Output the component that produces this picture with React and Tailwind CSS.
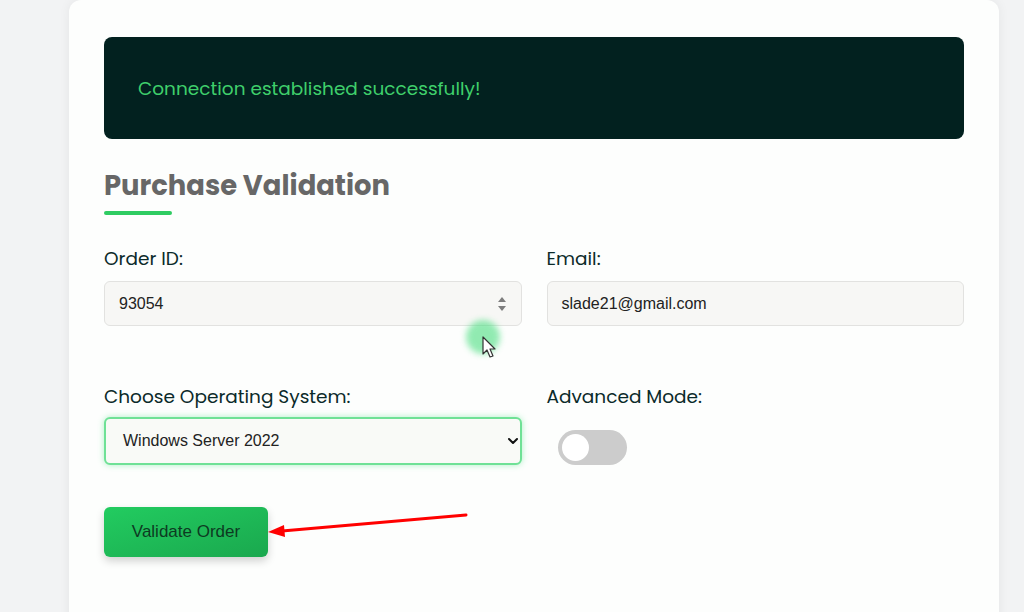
import React from "react";

export default function App() {
  const font = { fontFamily: "'Poppins', 'Open Sans', sans-serif" };
  const label = "block text-[18.5px] leading-[24px] font-normal text-[#0b2a2a]";
  return (
    <div className="relative min-h-[612px] h-[612px] overflow-hidden bg-[#f2f3f4]">
      <div
        className="ml-[69px] w-[930px] h-[640px] rounded-t-xl bg-[#fdfefd] shadow-[0_0_12px_rgba(0,0,0,0.06)] pt-[37px] px-[35px]"
        style={font}
      >
        <div className="h-[102px] rounded-lg bg-[#02211f] flex items-center pl-[34px] pt-[2px]">
          <span className="text-[18.5px] font-normal text-[#3fcf6b]">
            Connection established successfully!
          </span>
        </div>

        <h2 className="mt-[29px] text-[27.4px] leading-[36px] font-bold text-[#676767]">
          Purchase Validation
        </h2>
        <div className="mt-[7px] w-[68px] h-[4px] rounded-full bg-[#2fcc62]" />

        <div className="mt-[32px] grid grid-cols-2 gap-x-[25px]">
          <div>
            <label className={label}>Order ID:</label>
            <div className="mt-[10px] h-[45px] rounded-md border border-[#e2e2e0] bg-[#f7f7f5] flex items-center justify-between pl-[14px] pr-[14px]">
              <span className="text-[16px] text-[#222] font-['Liberation_Sans',Arial,sans-serif]">93054</span>
              <svg width="10" height="16" viewBox="0 0 10 16">
                <path d="M5 1 L9 6 L1 6 Z" fill="#7d7d7d" />
                <path d="M5 15 L9 10 L1 10 Z" fill="#7d7d7d" />
              </svg>
            </div>
          </div>
          <div>
            <label className={label}>Email:</label>
            <div className="mt-[10px] h-[45px] rounded-md border border-[#e2e2e0] bg-[#f7f7f5] flex items-center pl-[14px]">
              <span className="text-[16px] text-[#222] font-['Liberation_Sans',Arial,sans-serif]">slade21@gmail.com</span>
            </div>
          </div>

          <div className="mt-[59px]">
            <label className={label}>Choose Operating System:</label>
            <div className="mt-[8px] h-[48px] rounded-md border-2 border-[#6fe196] bg-[#f9faf7] shadow-[0_0_6px_rgba(74,222,128,0.45)] flex items-center justify-between pl-[17px] pr-[1px]">
              <span className="text-[16px] text-[#222] font-['Liberation_Sans',Arial,sans-serif]">Windows Server 2022</span>
              <svg width="12" height="12" viewBox="0 0 12 12">
                <path d="M2 4 L6 8 L10 4" fill="none" stroke="#111" strokeWidth="2" strokeLinecap="round" strokeLinejoin="round" />
              </svg>
            </div>
          </div>
          <div className="mt-[59px]">
            <label className={label}>Advanced Mode:</label>
            <div className="mt-[21px] ml-[11px] w-[69px] h-[35px] rounded-full bg-[#cccccc] flex items-center pl-[4px]">
              <div className="w-[27px] h-[27px] rounded-full bg-white" />
            </div>
          </div>
        </div>

        <button className="mt-[42px] w-[164px] h-[50px] rounded-md bg-gradient-to-br from-[#22cc60] to-[#1aa84e] shadow-[0_4px_8px_rgba(0,0,0,0.18)] text-[17px] text-[#0d3a22] font-['Liberation_Sans',Arial,sans-serif]">
          Validate Order
        </button>
      </div>

      {/* cursor highlight */}
      <div className="absolute left-[466px] top-[320px] w-[34px] h-[34px] rounded-full bg-[#4ade80] opacity-60 blur-[3px]" />
      <svg className="absolute left-[482px] top-[336px]" width="16" height="24" viewBox="0 0 16 24">
        <path d="M1 1 L1 18 L5 14 L8 21 L11 20 L8 13 L13 13 Z" fill="#fff" stroke="#333" strokeWidth="1.2" strokeLinejoin="round" />
      </svg>

      {/* red arrow */}
      <svg className="absolute left-[260px] top-[505px]" width="215" height="40" viewBox="0 0 215 40">
        <line x1="206" y1="10" x2="22" y2="26" stroke="#f00" strokeWidth="3" strokeLinecap="round" />
        <path d="M8 27 L24 20 L25 32 Z" fill="#f00" />
      </svg>
    </div>
  );
}
